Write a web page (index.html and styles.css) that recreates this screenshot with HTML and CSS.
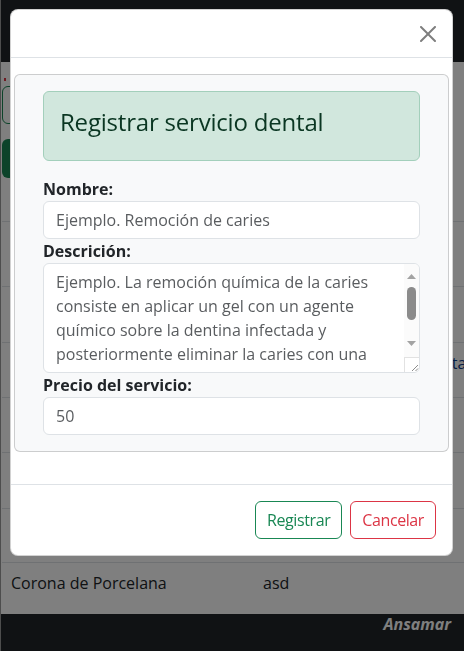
FILE: index.html
```html
<!DOCTYPE html>
<html lang="es">
<head>
<meta charset="utf-8">
<title>Servicios dentales</title>
<link rel="stylesheet" href="styles.css">
</head>
<body>
<div class="page">
  <nav class="navbar"></nav>
  <main class="content">
    <span class="req"></span>
    <input class="search" type="text" aria-label="Buscar">
    <button class="btn-add" type="button">Nuevo servicio</button>
    <div class="table">
      <div class="trow r1"><span>Nombre</span><span>Descripción</span></div>
      <div class="trow r2"><span>Limpieza</span><span>Limpieza dental</span></div>
      <div class="trow r3"><span>Extracción</span><span>Extracción simple</span></div>
      <div class="trow r4"><span>Resina</span><span>Resina fotocurable</span><span class="act">Editar</span></div>
      <div class="trow r5"><span>Endodoncia</span><span>Tratamiento de conducto</span></div>
      <div class="trow r6"><span>Blanqueamiento</span><span>Blanqueamiento dental</span></div>
      <div class="trow r7"><span>Ortodoncia</span><span>Brackets metálicos</span></div>
      <div class="trow r8"><span>Corona de Porcelana</span><span>asd</span></div>
    </div>
  </main>
  <footer class="footer"><span class="brand">Ansamar</span></footer>
</div>

<div class="backdrop"></div>

<div class="modal">
  <div class="modal-content">
    <div class="modal-header">
      <button class="btn-close" type="button" aria-label="Cerrar">
        <svg viewBox="0 0 16 16" width="16" height="16"><path d="M.293.293a1 1 0 0 1 1.414 0L8 6.586 14.293.293a1 1 0 1 1 1.414 1.414L9.414 8l6.293 6.293a1 1 0 0 1-1.414 1.414L8 9.414l-6.293 6.293a1 1 0 0 1-1.414-1.414L6.586 8 .293 1.707a1 1 0 0 1 0-1.414z" fill="#000"/></svg>
      </button>
    </div>
    <div class="modal-body">
      <form class="card">
        <div class="alert"><h3>Registrar servicio dental</h3></div>
        <label class="lbl" for="nombre">Nombre:</label>
        <input class="form-control" id="nombre" type="text" placeholder="Ejemplo. Remoción de caries">
        <label class="lbl" for="desc">Descrición:</label>
        <div class="area-wrap">
          <textarea class="form-control area" id="desc" rows="4">Ejemplo. La remoción química de la caries consiste en aplicar un gel con un agente químico sobre la dentina infectada y posteriormente eliminar la caries con una cucharilla o excavador manual, sin necesidad de usar la fresa.</textarea>
          <div class="sbar" aria-hidden="true">
            <svg class="sb-arrow" viewBox="0 0 9 5" width="9" height="5"><polygon points="0,5 4.5,0 9,5" fill="#a3a3a3"/></svg>
            <span class="sb-thumb"></span>
            <svg class="sb-arrow sb-down" viewBox="0 0 9 5" width="9" height="5"><polygon points="0,0 9,0 4.5,5" fill="#a3a3a3"/></svg>
          </div>
          <span class="sb-corner" aria-hidden="true">
            <svg viewBox="0 0 14 14" width="14" height="14"><path d="M13 7 7 13M13 10.5 10.5 13" stroke="#8c8c8c" stroke-width="1" fill="none"/></svg>
          </span>
        </div>
        <label class="lbl" for="precio">Precio del servicio:</label>
        <input class="form-control" id="precio" type="number" placeholder="50">
      </form>
    </div>
    <div class="modal-footer">
      <button class="btn btn-ok" type="button">Registrar</button>
      <button class="btn btn-cancel" type="button">Cancelar</button>
    </div>
  </div>
</div>
</body>
</html>
```

FILE: styles.css
```css
* { box-sizing: border-box; }

html, body {
  margin: 0;
  height: 100%;
}

body {
  font-family: "Open Sans", "Noto Sans", sans-serif;
  font-size: 16px;
  line-height: 1.5;
  color: #212529;
  background: #fff;
  overflow: hidden;
}

/* ---------- background page ---------- */
.page {
  height: 651px;
  display: flex;
  flex-direction: column;
  border-left: 1px solid #9a9a9a;
}

.navbar {
  flex: none;
  height: 62px;
  background: #212529;
}

.content {
  flex: 1;
  display: flex;
  flex-direction: column;
  padding-left: 1px;
  min-height: 0;
}

.req {
  display: block;
  width: 2px;
  height: 3px;
  margin: 16px 0 0 2px;
  background: #dc3545;
}

.search {
  display: block;
  width: 300px;
  height: 38px;
  margin-top: 5px;
  border: 1px solid #198754;
  border-radius: 6px;
}

.btn-add {
  display: block;
  width: 140px;
  height: 39px;
  margin-top: 15px;
  border: 0;
  border-radius: 6px;
  background: #198754;
  color: #fff;
  font: inherit;
}

.table {
  flex: 1;
  display: flex;
  flex-direction: column;
}

.trow {
  display: grid;
  grid-template-columns: 252px 166px 1fr;
  align-items: start;
  padding: 8px 9px 0;
  border-bottom: 1px solid #dee2e6;
  white-space: nowrap;
}

.r1 { height: 44px; }
.r2 { height: 65px; }
.r3 { height: 56px; }
.r4 { height: 55px; }
.r5 { height: 55px; }
.r6 { height: 56px; }
.r7 { height: 54px; }
.r8 { flex: 1; border-bottom: 0; }

.act { color: #0b3a8a; }

.footer {
  flex: none;
  height: 37px;
  background: #212529;
  display: flex;
  justify-content: flex-end;
  padding: 0 13px 0 0;
}

.brand {
  color: #fff;
  font-weight: 700;
  font-style: italic;
  line-height: 20px;
}

/* ---------- modal ---------- */
.backdrop {
  position: fixed;
  inset: 0;
  background: rgba(0, 0, 0, 0.5);
}

.modal {
  position: fixed;
  top: 9px;
  left: 10px;
  width: 443px;
}

.modal-content {
  background: #fff;
  border: 1px solid rgba(0, 0, 0, 0.175);
  border-radius: 8px;
}

.modal-header {
  display: flex;
  justify-content: flex-end;
  padding: 16px 16px 15px;
  border-bottom: 1px solid #dee2e6;
}

.btn-close {
  box-sizing: content-box;
  width: 16px;
  height: 16px;
  padding: 8px;
  margin: -8px -8px -8px auto;
  border: 0;
  background: transparent;
  opacity: 0.5;
  display: flex;
}

.modal-body {
  padding: 16px 3px;
}

.card {
  margin: 0 0 16px;
  padding: 16px 28px;
  background: #f8f9fa;
  border: 1px solid rgba(0, 0, 0, 0.175);
  border-radius: 6px;
}

.alert {
  margin-bottom: 16px;
  padding: 16px;
  background: #d1e7dd;
  border: 1px solid #a3cfbb;
  border-radius: 6px;
  color: #0a3622;
}

.alert h3 {
  margin: 0 0 8px;
  font-size: 24px;
  line-height: 28px;
  font-weight: 500;
  letter-spacing: -0.2px;
}

.lbl {
  display: block;
  font-weight: 700;
  line-height: 24px;
}

.form-control {
  display: block;
  width: 100%;
  height: 38px;
  padding: 6px 12px;
  font: inherit;
  line-height: 24px;
  color: rgba(33, 37, 41, 0.75);
  background: #fff;
  border: 1px solid #dee2e6;
  border-radius: 6px;
}

.form-control::placeholder {
  color: rgba(33, 37, 41, 0.75);
}

/* textarea with its drawn scrollbar */
.area-wrap {
  position: relative;
}

.area {
  height: 110px;
  padding-right: 27px;
  overflow: hidden;
  resize: none;
}

.sbar {
  position: absolute;
  top: 1px;
  right: 1px;
  width: 15px;
  height: 93px;
  display: flex;
  flex-direction: column;
  align-items: center;
  padding-top: 10px;
  background: #fbfbfb;
  border-top-right-radius: 5px;
}

.sb-arrow {
  display: block;
  flex: none;
}

.sb-thumb {
  flex: none;
  width: 9px;
  height: 33px;
  margin-top: 8px;
  background: #8b8b8b;
  border-radius: 5px;
}

.sb-down {
  margin-top: 21px;
}

.sb-corner {
  position: absolute;
  right: 1px;
  bottom: 1px;
  width: 15px;
  height: 15px;
  display: flex;
  align-items: flex-end;
  justify-content: flex-end;
  background: #fff;
  border-top: 1px solid #e2e2e2;
  border-left: 1px solid #e2e2e2;
  border-bottom-right-radius: 5px;
}

.modal-footer {
  display: flex;
  justify-content: flex-end;
  padding: 12px;
  border-top: 1px solid #dee2e6;
}

.btn {
  margin: 4px;
  padding: 6px 11px;
  font: inherit;
  line-height: 24px;
  letter-spacing: -0.4px;
  background: transparent;
  border: 1px solid;
  border-radius: 6px;
}

.btn-ok { color: #198754; border-color: #198754; }
.btn-cancel { color: #dc3545; border-color: #dc3545; }
```
